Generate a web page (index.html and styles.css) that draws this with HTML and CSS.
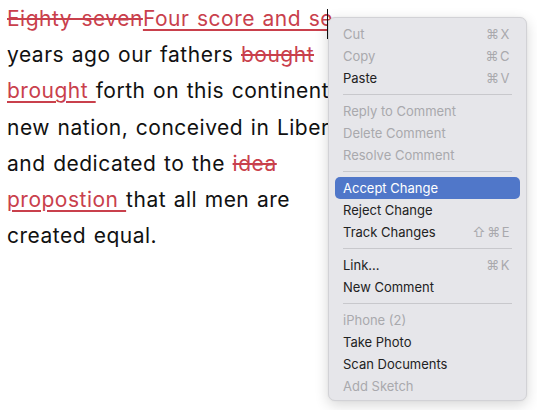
FILE: index.html
```html
<!DOCTYPE html>
<html>
<head>
<meta charset="utf-8">
<link rel="stylesheet" href="styles.css">
</head>
<body>
<div class="doc">
  <p class="text">
    <span class="line"><del>Eighty-seven</del><ins>Four score and se</ins><span class="caret"></span></span>
    <span class="line">years ago our fathers <del>bought</del></span>
    <span class="line"><ins>brought </ins>forth on this continent</span>
    <span class="line">new nation, conceived in Liberty,</span>
    <span class="line">and dedicated to the <del>idea</del></span>
    <span class="line"><ins>propostion </ins>that all men are</span>
    <span class="line">created equal.</span>
  </p>
</div>
<div class="menu">
  <div class="item disabled"><span>Cut</span><span class="key">⌘X</span></div>
  <div class="item disabled"><span>Copy</span><span class="key">⌘C</span></div>
  <div class="item"><span>Paste</span><span class="key">⌘V</span></div>
  <div class="sep"></div>
  <div class="item disabled"><span>Reply to Comment</span></div>
  <div class="item disabled"><span>Delete Comment</span></div>
  <div class="item disabled"><span>Resolve Comment</span></div>
  <div class="sep"></div>
  <div class="item active"><span>Accept Change</span></div>
  <div class="item"><span>Reject Change</span></div>
  <div class="item"><span>Track Changes</span><span class="key">⇧⌘E</span></div>
  <div class="sep"></div>
  <div class="item"><span>Link...</span><span class="key">⌘K</span></div>
  <div class="item"><span>New Comment</span></div>
  <div class="sep"></div>
  <div class="item disabled"><span>iPhone (2)</span></div>
  <div class="item"><span>Take Photo</span></div>
  <div class="item"><span>Scan Documents</span></div>
  <div class="item disabled"><span>Add Sketch</span></div>
</div>
</body>
</html>
```
FILE: styles.css
```css
html, body {
  margin: 0;
  padding: 0;
  background: #ffffff;
  width: 537px;
  height: 410px;
  overflow: hidden;
}
.doc {
  padding: 1px 0 0 7px;
}
.text {
  margin: 0;
  font-family: Inter, "Liberation Sans", sans-serif;
  font-size: 21px;
  letter-spacing: 0.5px;
  word-spacing: 1.2px;
  line-height: 36.2px;
  color: #111111;
  white-space: nowrap;
}
.line {
  display: block;
}
del {
  color: #c9404c;
  text-decoration: line-through;
  text-decoration-thickness: 1.5px;
}
ins {
  color: #c9404c;
  text-decoration: underline;
  text-decoration-thickness: 1.5px;
  text-underline-offset: 3px;
}
.caret {
  position: relative;
  display: inline-block;
  width: 0;
}
.caret::after {
  content: "";
  position: absolute;
  left: -6px;
  top: -17px;
  width: 1.2px;
  height: 30px;
  background: #111111;
}
.menu {
  position: absolute;
  left: 328px;
  top: 17px;
  width: 199px;
  height: 384px;
  box-sizing: border-box;
  padding: 5px 6px 4px 6px;
  background: #e6e6ea;
  border: 1px solid #d2d2d6;
  border-radius: 7px;
  box-shadow: 0 4px 14px rgba(0, 0, 0, 0.16), 0 0 2px rgba(0, 0, 0, 0.06);
  font-family: Inter, "Liberation Sans", sans-serif;
  font-size: 13px;
  color: #222222;
}
.item {
  height: 22px;
  display: flex;
  align-items: center;
  justify-content: space-between;
  padding: 0 9px 0 8px;
  border-radius: 5px;
}
.item.disabled {
  color: #a9a9ad;
}
.item.active {
  background: #5077c9;
  color: #ffffff;
}
.key {
  color: #a9a9ad;
  font-family: Inter, "DejaVu Sans", sans-serif;
  letter-spacing: 1.5px;
}
.sep {
  height: 1px;
  margin: 5px 8px 5px 8px;
  background: #c8c8cc;
}
```
